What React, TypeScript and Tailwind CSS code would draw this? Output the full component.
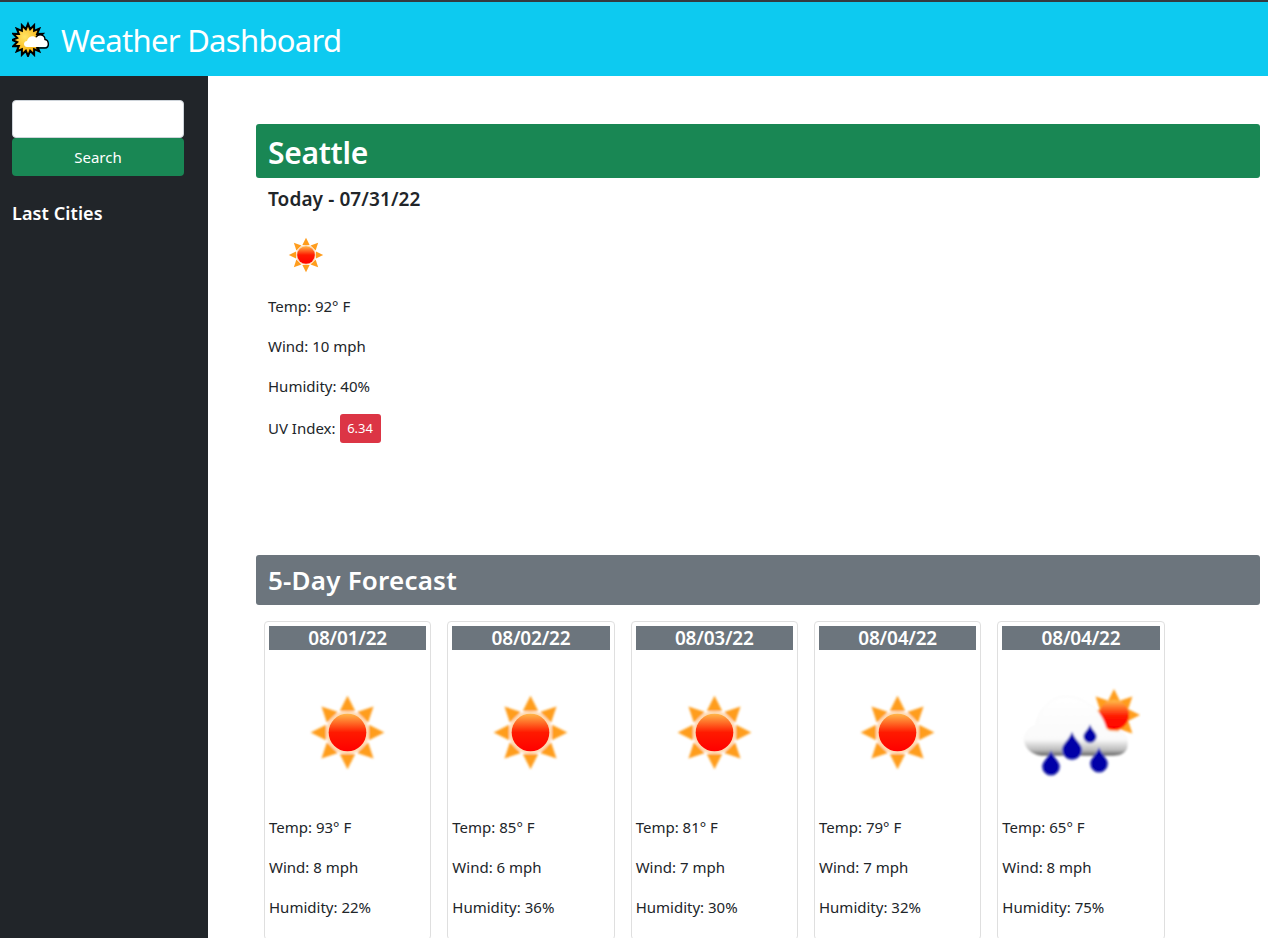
import React from "react";

const days = [
  { date: "08/01/22", temp: 93, wind: 8, humidity: 22, rainy: false },
  { date: "08/02/22", temp: 85, wind: 6, humidity: 36, rainy: false },
  { date: "08/03/22", temp: 81, wind: 7, humidity: 30, rainy: false },
  { date: "08/04/22", temp: 79, wind: 7, humidity: 32, rainy: false },
  { date: "08/04/22", temp: 65, wind: 8, humidity: 75, rainy: true },
];

function Rays({ cx, cy, r, tip, w }: { cx: number; cy: number; r: number; tip: number; w: number }) {
  return (
    <>
      {[0, 45, 90, 135, 180, 225, 270, 315].map((a) => (
        <polygon
          key={a}
          points={`${cx - w},${cy - r} ${cx + w},${cy - r} ${cx},${cy - tip}`}
          transform={`rotate(${a} ${cx} ${cy})`}
          fill="#ff9d1e"
        />
      ))}
    </>
  );
}

function SunIcon({ size, id }: { size: number; id: string }) {
  return (
    <svg width={size} height={size} viewBox="0 0 50 50">
      <defs>
        <linearGradient id={id} x1="0" y1="0" x2="0" y2="1">
          <stop offset="0" stopColor="#ffb84a" />
          <stop offset="0.5" stopColor="#ff1a00" />
          <stop offset="1" stopColor="#ff0000" />
        </linearGradient>
        <filter id={id + "b"}>
          <feGaussianBlur stdDeviation="0.45" />
        </filter>
      </defs>
      <g filter={`url(#${id}b)`}>
        <Rays cx={25} cy={25} r={10} tip={17.2} w={3.6} />
        <circle cx={25} cy={25} r={10} fill="#ffd9b0" />
      </g>
      <circle cx={25} cy={25} r={8.8} fill={`url(#${id})`} />
    </svg>
  );
}

function RainIcon() {
  const drop = (x: number, y: number, s: number) => (
    <path
      key={x}
      d={`M${x} ${y - 1.5 * s} C${x + 0.3 * s} ${y - 0.7 * s} ${x + s} ${y - 0.3 * s} ${x + s} ${y + 0.3 * s} A${s} ${s} 0 1 1 ${x - s} ${y + 0.3 * s} C${x - s} ${y - 0.3 * s} ${x - 0.3 * s} ${y - 0.7 * s} ${x} ${y - 1.5 * s} Z`}
      fill="#0000a8"
      stroke="#8f95d8"
      strokeWidth="0.8"
    />
  );
  return (
    <svg width={120} height={100} viewBox="1020 685 120 100">
      <defs>
        <linearGradient id="cloudFill" x1="0" y1="0" x2="0" y2="1">
          <stop offset="0" stopColor="#ffffff" />
          <stop offset="0.72" stopColor="#fafafa" />
          <stop offset="0.9" stopColor="#bcbcbc" />
          <stop offset="1" stopColor="#5a5a5a" />
        </linearGradient>
        <linearGradient id="rainSun" x1="0" y1="0" x2="0" y2="1">
          <stop offset="0" stopColor="#ffc04a" />
          <stop offset="0.55" stopColor="#ff1500" />
          <stop offset="1" stopColor="#ff0000" />
        </linearGradient>
        <filter id="soft">
          <feGaussianBlur stdDeviation="0.8" />
        </filter>
      </defs>
      <g filter="url(#soft)">
        <Rays cx={1113} cy={717} r={14} tip={26} w={6} />
        <circle cx={1113} cy={717} r={15} fill="url(#rainSun)" />
        <path
          d="M1040 758 C1027 756 1021 746 1024 738 C1026 732 1030 729 1035 728 C1036 715 1046 703 1058 699 C1070 697 1080 700 1087 706 C1095 708 1103 720 1106 733 C1111 733 1116 733 1121 734 C1127 739 1129 749 1124 754 C1120 758 1115 758 1108 758 Z"
          fill="url(#cloudFill)"
          stroke="#f4f4f4"
          strokeWidth="0.6"
        />
        {drop(1050, 766, 9)}
        {drop(1071, 749, 10)}
        {drop(1089, 736.5, 6.5)}
        {drop(1098, 763, 9)}
      </g>
    </svg>
  );
}

function HeaderLogo() {
  const points: string[] = [];
  for (let i = 0; i < 32; i++) {
    const a = (i / 32) * Math.PI * 2;
    const r = i % 2 === 0 ? 16 : 11;
    points.push(`${16 + r * Math.cos(a)},${19 + r * Math.sin(a)}`);
  }
  return (
    <svg width={38} height={36} viewBox="0 0 38 36">
      <defs>
        <radialGradient id="logoSun" cx="0.4" cy="0.4" r="0.6">
          <stop offset="0" stopColor="#ffe566" />
          <stop offset="1" stopColor="#f9a800" />
        </radialGradient>
      </defs>
      <polygon points={points.join(" ")} fill="url(#logoSun)" stroke="#000" strokeWidth="2" strokeLinejoin="miter" />
      <path
        d="M15 26 C11 26 11 20 15 20 C16 15 22 14 24 17 C27 12 33 14 33 19 C37 19 37 26 33 26 Z"
        fill="#fff"
      />
      <path d="M24 16 C27 12 33 14 33 18.5 C37 19 38 27 33 27 L24 27" fill="none" stroke="#000" strokeWidth="1.4" />
    </svg>
  );
}

function ForecastCard({ day, index }: { day: (typeof days)[number]; index: number }) {
  return (
    <div className="w-[167.33px] shrink-0 border border-[#dfdfdf] rounded p-1 text-[#212529]">
      <div className="h-6 bg-[#6c757d] text-white text-center text-[19px] font-semibold leading-6 tracking-[-0.2px]">
        {day.date}
      </div>
      <div className="h-[165px] flex items-center justify-center">
        {day.rainy ? <RainIcon /> : <SunIcon size={107} id={`sun${index}`} />}
      </div>
      <p className="mb-4 leading-6 text-[15px]">Temp: {day.temp}° F</p>
      <p className="mb-4 leading-6 text-[15px]">Wind: {day.wind} mph</p>
      <p className="mb-4 leading-6 text-[15px]">Humidity: {day.humidity}%</p>
    </div>
  );
}

export default function App() {
  return (
    <div className="h-[938px] overflow-hidden flex flex-col bg-white font-['Noto_Sans',sans-serif]">
      <header className="h-[76px] shrink-0 bg-[#0dcaf0] border-t-2 border-[#343a40] flex items-center pl-3 gap-[11px] text-white">
        <HeaderLogo />
        <h1 className="pt-[3px] text-[31px] font-normal leading-none tracking-[-0.7px]">Weather Dashboard</h1>
      </header>
      <div className="flex flex-1 min-h-0">
        <aside className="w-[208px] shrink-0 bg-[#212529] pl-3 pt-6 text-white">
          <input className="block w-[172px] h-[38px] bg-white rounded border border-[#ced4da]" aria-label="City" />
          <button className="block w-[172px] h-[38px] bg-[#198754] rounded text-[15px]">Search</button>
          <h2 className="mt-[25px] text-[18px] font-semibold leading-6 tracking-[0.1px]">Last Cities</h2>
        </aside>
        <main className="flex-1 min-w-0 pl-12 pr-2 pt-12 text-[#212529]">
          <div className="h-[54px] pt-0.5 bg-[#198754] rounded-[3px] px-3 flex items-center text-white text-[30px] font-semibold tracking-[-0.3px]">
            Seattle
          </div>
          <div className="px-3">
            <h3 className="mt-[9px] text-[19px] font-semibold leading-6 tracking-[0.1px]">Today - 07/31/22</h3>
            <div className="mt-[19px] pl-[13px] h-[50px]">
              <SunIcon size={50} id="sunToday" />
            </div>
            <p className="mt-[14px] mb-4 leading-6 text-[15px]">Temp: 92° F</p>
            <p className="mb-4 leading-6 text-[15px]">Wind: 10 mph</p>
            <p className="mb-4 leading-6 text-[15px]">Humidity: 40%</p>
            <p className="flex items-center h-[29px] text-[15px]">
              UV Index:
              <span className="ml-1 h-[29px] w-[41px] rounded-[3px] bg-[#dc3545] text-white text-[13px] flex items-center justify-center">
                6.34
              </span>
            </p>
          </div>
          <div className="mt-[112px] h-[50px] bg-[#6c757d] rounded-[3px] px-3 flex items-center text-white text-[26px] font-semibold tracking-[0.2px]">
            5-Day Forecast
          </div>
          <div className="mt-4 ml-2 flex gap-4">
            {days.map((day, i) => (
              <ForecastCard key={i} day={day} index={i} />
            ))}
          </div>
        </main>
      </div>
    </div>
  );
}
